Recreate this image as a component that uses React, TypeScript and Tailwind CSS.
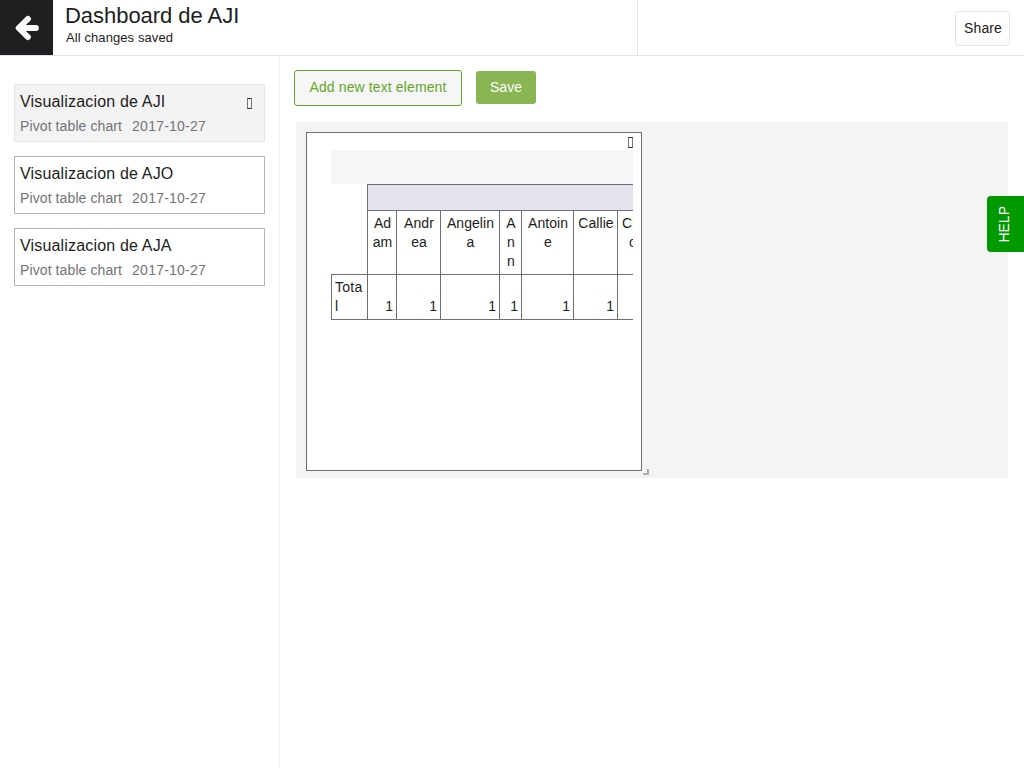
const items = ["Visualizacion de AJI", "Visualizacion de AJO", "Visualizacion de AJA"];

const columns: { lines: string[]; width: string }[] = [
  { lines: ["Ad", "am"], width: "w-[29px]" },
  { lines: ["Andr", "ea"], width: "w-[44px]" },
  { lines: ["Angelin", "a"], width: "w-[59px]" },
  { lines: ["A", "n", "n"], width: "w-[22px]" },
  { lines: ["Antoin", "e"], width: "w-[52px]" },
  { lines: ["Callie"], width: "w-[44px]" },
  { lines: ["Chlo", "co"], width: "w-[37px]" },
];

function BackArrow() {
  return (
    <svg width="27" height="28" viewBox="0 0 27 28" fill="none" stroke="#f9f9fb" strokeWidth="5.8" strokeLinecap="round" strokeLinejoin="round">
      <path d="M15 4.900 5.600 14l9.400 9.100M6.500 14H23" />
    </svg>
  );
}

function CloseGlyph() {
  return <span className="block h-[11px] w-[5px] border border-x-[#77777a] border-y-[#2d2d30]" />;
}

function Sidebar() {
  return (
    <aside className="flex w-[280px] shrink-0 flex-col gap-[14px] border-r border-[#f2f2f2] px-[14px] pt-7">
      {items.map((title, i) => (
        <div
          key={title}
          className={
            i === 0
              ? "flex h-[58px] justify-between border border-[#e6e6e6] bg-[#f3f3f3] pl-[5px] pr-3"
              : "flex h-[58px] justify-between border border-[#b6b6b8] bg-white pl-[5px] pr-3"
          }
        >
          <div>
            <div className="mt-[5px] text-[16px] leading-[24px] tracking-[0.17px]">{title}</div>
            <div className="mt-[2px] flex gap-[10px] text-[14px] leading-[20px] text-[#737376]">
              <span className="tracking-[0.1px]">Pivot table chart</span>
              <span className="tracking-[0.23px]">2017-10-27</span>
            </div>
          </div>
          {i === 0 && (
            <div className="pt-[13px]">
              <CloseGlyph />
            </div>
          )}
        </div>
      ))}
    </aside>
  );
}

function PivotTable() {
  return (
    <div className="ml-6 w-[302px] overflow-hidden text-[14px] leading-[19px] tracking-[0.05px]">
      <div className="h-[34px] bg-[#f6f6f9]" />
      <div className="w-[340px]">
        <div className="ml-9 h-[26px] border-l border-t border-[#6f6f73] bg-[#e4e4ee]" />
        <div className="ml-9 flex h-16">
          {columns.map((c) => (
            <div key={c.lines[0]} className={`${c.width} shrink-0 border-l border-t border-[#6f6f73] pt-[3px] pl-px text-center`}>
              {c.lines.map((line, i) => (
                <div key={i} className="whitespace-nowrap">{line}</div>
              ))}
            </div>
          ))}
        </div>
        <div className="flex h-[46px]">
          <div className="w-9 shrink-0 border-y border-l border-[#6f6f73] pl-[3px] pt-[3px] tracking-[0.25px]">
            <div>Tota</div>
            <div>l</div>
          </div>
          {columns.map((c) => (
            <div key={c.lines[0]} className={`${c.width} flex shrink-0 items-end justify-end border-y border-l border-[#6f6f73] pb-[3px] pr-[3px]`}>
              1
            </div>
          ))}
        </div>
      </div>
    </div>
  );
}

export default function App() {
  return (
    <div className="flex h-[768px] w-[1024px] flex-col overflow-hidden bg-white font-['Liberation_Sans',Arial,sans-serif] text-[#1d1d20]">
      <header className="flex h-14 shrink-0 border-b border-[#e4e4e8]">
        <button className="flex w-[53px] items-start bg-[#1f1f22] pl-[13px] pt-[14px]">
          <BackArrow />
        </button>
        <div className="w-[585px] border-r border-[#e4e4ee] pl-3">
          <h1 className="mt-[2px] text-[22px] leading-[27px] tracking-[-0.04px]">Dashboard de AJI</h1>
          <p className="pl-px text-[13px] leading-[17px] tracking-[0.09px]">All changes saved</p>
        </div>
        <div className="flex flex-1 justify-end pr-[14px] pt-[11px]">
          <button className="h-[35px] w-[55px] rounded-[3px] border border-[#e4e4ee] pl-px text-[14px] tracking-[0.1px]">Share</button>
        </div>
      </header>
      <div className="flex flex-1">
        <Sidebar />
        <main className="flex-1 pl-[14px] pt-[14px]">
          <div className="flex h-9 items-start gap-[14px]">
            <button className="h-9 w-[168px] rounded-[3px] border border-[#65a722] bg-[#f6f6f9] pb-[2px] text-[14px] tracking-[0.12px] text-[#65a722]">
              Add new text element
            </button>
            <button className="mt-px h-[33px] w-[60px] rounded-[3px] bg-[#8ab553] text-[14px] text-white">Save</button>
          </div>
          <section className="ml-[2px] mt-4 flex h-[356px] w-[712px] bg-[#f4f4f4] pl-[10px] pt-[10px]">
            <div className="h-[339px] w-[336px] border border-[#6f6f73] bg-white">
              <div className="flex h-[17px] justify-end pr-2 pt-1">
                <CloseGlyph />
              </div>
              <PivotTable />
            </div>
            <svg className="ml-px mt-[337px]" width="6" height="6" viewBox="0 0 6 6">
              <path d="M5 0v5H0" fill="none" stroke="#acacac" strokeWidth="2" />
            </svg>
          </section>
        </main>
      </div>
      <button className="fixed right-0 top-[196px] flex h-14 w-[37px] items-center justify-center rounded-l-[4px] bg-[#009900] pr-[3px] text-white">
        <span className="rotate-180 text-[14px] leading-[16px] [writing-mode:vertical-rl]">HELP</span>
      </button>
    </div>
  );
}
